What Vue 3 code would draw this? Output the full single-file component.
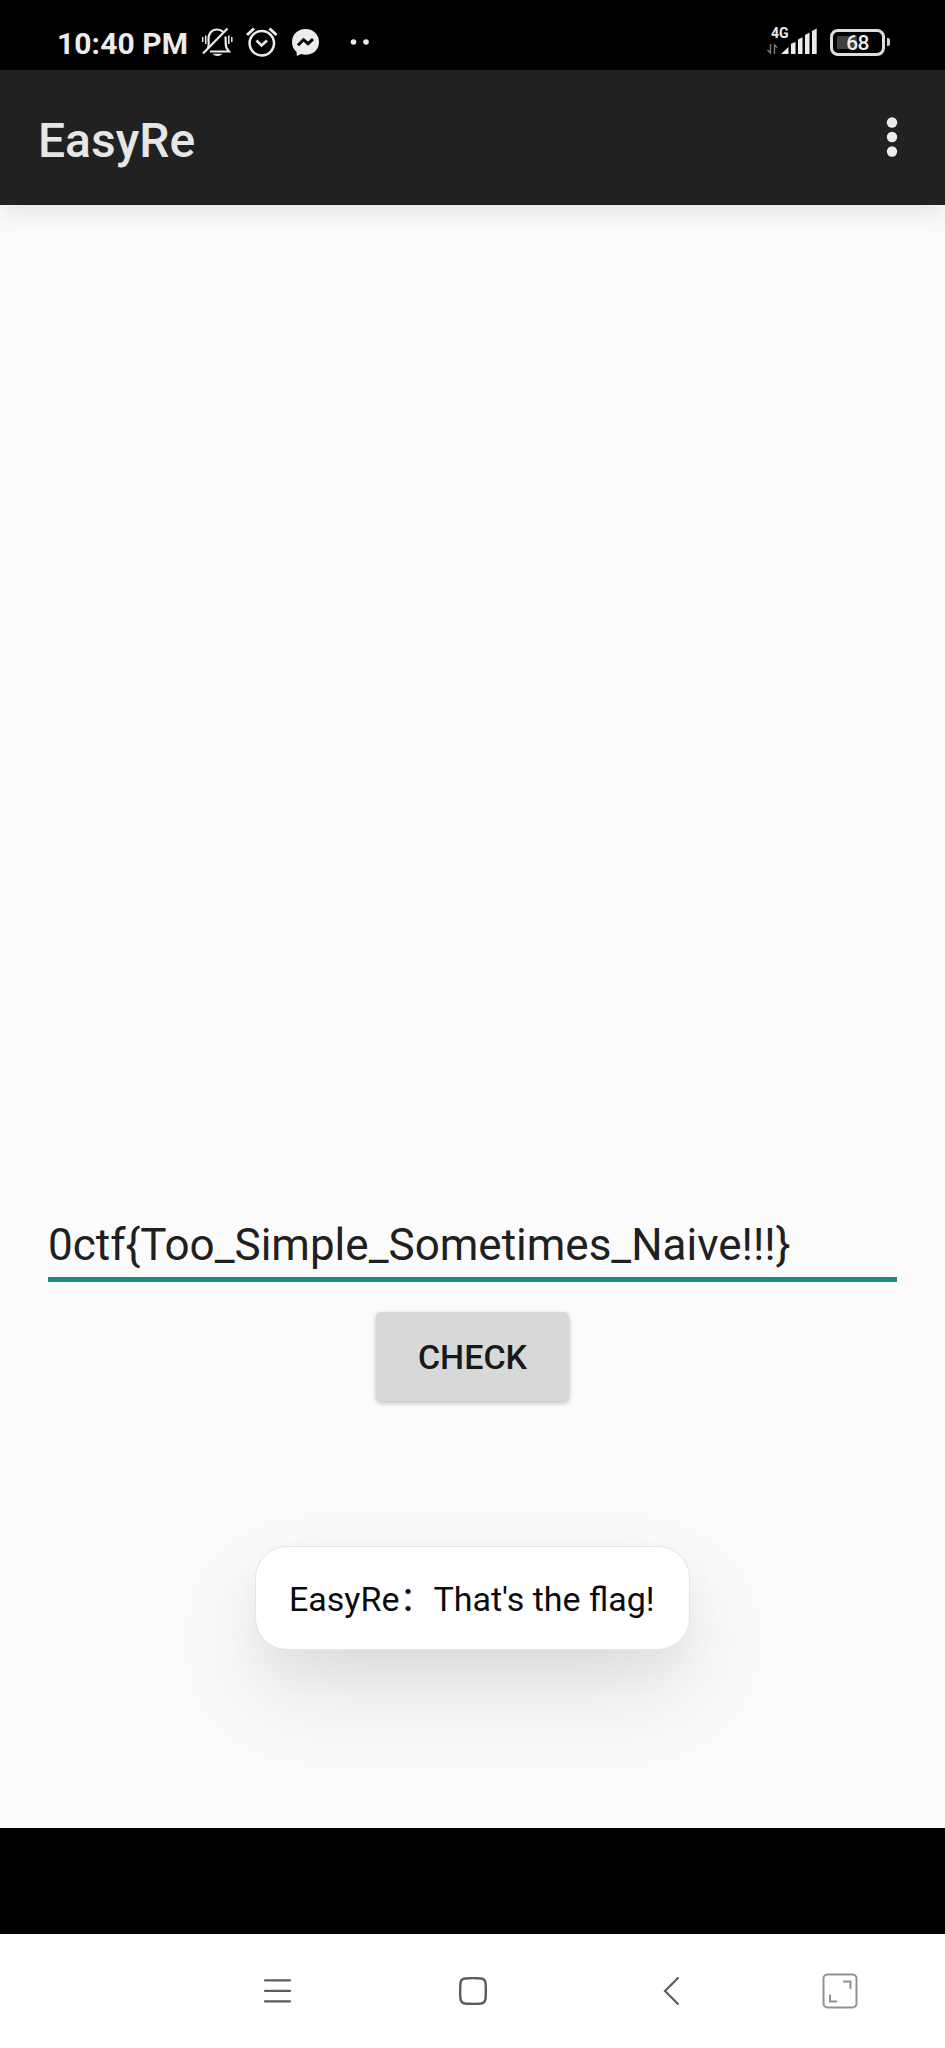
<script setup>
import { ref } from 'vue'

const flag = ref('0ctf{Too_Simple_Sometimes_Naive!!!}')
</script>

<template>
  <div class="phone">
    <header class="status">
      <span class="time">10:40 PM</span>
      <svg class="bell" width="32" height="34" viewBox="201 26 32 34" fill="none" stroke="#ececec" stroke-width="2.200">
        <path d="M207.500 48.500C209.500 46.500 208.500 43 208.500 39.500C208.500 33 212 29.500 217 29.500C219.500 29.500 221.500 30.300 223 31.800M225.500 36.500C226 41 225.200 45.500 226.500 48L229 51.500H210" />
        <path d="M203 53.500L227.500 28.500" />
        <path d="M212.500 53.800H222.500Q220.500 56 217.500 56Q214.500 56 212.500 53.800Z" fill="#ececec" stroke="none" />
        <path d="M202.700 37V42M205.700 35.500V44M228.800 35.500V44M231.800 37V42" stroke-width="1.500" />
      </svg>
      <svg class="alarm" width="32" height="34" viewBox="246 26 32 34" fill="none" stroke="#ececec" stroke-width="2.500">
        <circle cx="261.800" cy="43.300" r="12.200" />
        <path d="M256.500 40.500L261.500 45.500L267 40.500" />
        <path d="M247 35L254 28.500M269.500 28.500L276.500 35" stroke-width="3" />
      </svg>
      <svg class="messenger" width="28" height="34" viewBox="292 26 28 34">
        <path d="M305.500 29C313.500 29 319 34.600 319 42C319 49.500 313.500 54.700 305.500 54.700C303.800 54.700 302.300 54.500 301 54.100L297.500 55.800Q296.700 56 296.700 55L296.600 52C293.700 49.600 292 46.100 292 42C292 34.600 297.500 29 305.500 29Z" fill="#ececec" />
        <path d="M298 45.200L303.500 39.700L308 43.700L313 39.200" fill="none" stroke="#080808" stroke-width="3" />
      </svg>
      <svg class="more-notes" width="20" height="10" viewBox="350 37 20 10" fill="#ececec">
        <circle cx="353.500" cy="42" r="2.800" />
        <circle cx="366" cy="42" r="2.800" />
      </svg>
      <div class="network">
        <span class="net-type">4G</span>
        <svg width="52" height="30" viewBox="765 26 52 30">
          <path d="M769.500 44V53L766.500 50M773.500 54V45L776 47.500" fill="none" stroke="#858585" stroke-width="1.300" />
          <path d="M780 54L787.500 47V54ZM790 54V43.800L794.500 42V54ZM797 54V39.500L801.500 37.200V54ZM804 54V35L808.500 32.500V54ZM811 54V31L815.700 28.500V54Z" fill="#ececec" />
        </svg>
      </div>
      <div class="battery"><span class="level"></span><span class="percent">68</span></div>
      <span class="cap"></span>
    </header>

    <div class="appbar">
      <h1>EasyRe</h1>
      <svg width="12" height="42" viewBox="0 0 12 42" fill="#ebebeb">
        <circle cx="6" cy="6.500" r="5.200" />
        <circle cx="6" cy="21" r="5.200" />
        <circle cx="6" cy="35.500" r="5.200" />
      </svg>
    </div>

    <main>
      <div class="field">{{ flag }}</div>
      <button class="check">CHECK</button>
      <div class="toast"><span>EasyRe：That's the flag!</span></div>
    </main>

    <div class="gap"></div>

    <nav>
      <svg class="recent" width="28" height="28" viewBox="0 0 28 28" fill="none" stroke="#5c5c5c" stroke-width="2.200">
        <path d="M2 3.300H27M2 13.800H27M2 24.300H27" stroke-linecap="round" />
      </svg>
      <svg class="home" width="28" height="28" viewBox="0 0 28 28" fill="none" stroke="#5c5c5c" stroke-width="2.400">
        <path d="M6 1.500Q14 .7 22 1.500Q26 2 26.500 6Q27.200 14 26.500 22Q26 26 22 26.500Q14 27.300 6 26.500Q2 26 1.500 22Q.8 14 1.500 6Q2 2 6 1.500Z" />
      </svg>
      <svg class="back" width="18" height="30" viewBox="0 0 18 30" fill="none" stroke="#5c5c5c" stroke-width="2.200">
        <path d="M15.500 1.500L2 15L15.500 28.500" />
      </svg>
      <svg class="expand" width="36" height="36" viewBox="0 0 36 36" fill="none" stroke="#929292" stroke-width="2">
        <rect x="1.500" y="1.500" width="33" height="33" rx="4" />
        <path d="M21 8.500H28.500V16M8 21.500V28.500H15" />
      </svg>
    </nav>
  </div>
</template>

<style>
body {
  margin: 0;
}
</style>

<style scoped>
.phone {
  width: 945px;
  height: 2048px;
  display: flex;
  flex-direction: column;
  overflow: hidden;
  background: #fbfbfb;
  font-family: Roboto, "Noto Sans CJK SC", sans-serif;
}
.status {
  height: 70px;
  flex: none;
  box-sizing: border-box;
  display: flex;
  align-items: center;
  padding: 0 55px 0 57px;
  background: #000;
  color: #ececec;
}
.status svg {
  flex: none;
  display: block;
}
.time {
  width: 144px;
  font-size: 30px;
  font-weight: 700;
  letter-spacing: 0.1px;
  line-height: 40px;
  padding-top: 15.500px;
  height: 54px;
  box-sizing: border-box;
  white-space: nowrap;
}
.bell {
  margin-top: 16px;
}
.alarm {
  margin: 16px 0 0 13px;
}
.messenger {
  margin: 16px 0 0 14px;
}
.more-notes {
  margin: 14px 0 0 30px;
}
.network {
  position: relative;
  margin: 12px 0 0 auto;
}
.net-type {
  position: absolute;
  left: 5px;
  top: 0;
  font-size: 14px;
  font-weight: 700;
  line-height: 14px;
}
.battery {
  position: relative;
  width: 55px;
  height: 27px;
  box-sizing: border-box;
  margin: 14px 0 0 12px;
  border: 3px solid #dedede;
  border-radius: 8px;
}
.level {
  position: absolute;
  left: 4px;
  top: 4px;
  width: 20px;
  height: 13px;
  background: #3f3f3f;
}
.percent {
  position: absolute;
  inset: 0;
  text-align: center;
  font-size: 21px;
  font-weight: 500;
  letter-spacing: -0.8px;
  line-height: 23px;
}
.cap {
  width: 3px;
  height: 8px;
  margin: 14px 0 0 2px;
  border-radius: 0 2px 2px 0;
  background: #d0d0d0;
}
.appbar {
  position: relative;
  height: 134.500px;
  flex: none;
  box-sizing: border-box;
  display: flex;
  align-items: center;
  justify-content: space-between;
  padding: 0 47px 0 38px;
  background: #212121;
  box-shadow: 0 8px 26px rgba(0, 0, 0, 0.09);
}
h1 {
  margin: 7px 0 0;
  font-size: 48px;
  font-weight: 500;
  line-height: 56px;
  color: #e6e6e6;
}
main {
  height: 1623.500px;
  flex: none;
  display: flex;
  flex-direction: column;
  align-items: center;
  background: #fbfbfb;
}
.field {
  width: 849px;
  height: 78px;
  box-sizing: border-box;
  margin-top: 999.500px;
  padding-top: 13px;
  border-bottom: 5px solid #1f8e82;
  color: #202020;
  font-size: 44px;
  line-height: 56px;
  white-space: nowrap;
}
.appbar,
.gap {
  z-index: 1;
}
.check {
  width: 193px;
  height: 89px;
  margin-top: 30px;
  padding: 0;
  border: 0;
  border-radius: 5px;
  background: #d7d9d8;
  box-shadow: 0 2px 5px rgba(0, 0, 0, 0.25);
  color: #181818;
  font: 500 34px/40px Roboto, sans-serif;
}
.toast {
  width: 435px;
  height: 104px;
  box-sizing: border-box;
  margin-top: 144.500px;
  border: 1px solid #e4e4e4;
  border-radius: 32px;
  background: #fff;
  box-shadow: 0 42px 92px rgba(0, 0, 0, 0.11), 0 18px 40px rgba(0, 0, 0, 0.035);
  color: #0b0b0b;
  font-size: 34px;
  line-height: 104px;
  padding-left: 33px;
  white-space: nowrap;
}
.gap {
  height: 106px;
  flex: none;
  background: #000;
}
nav {
  height: 114px;
  flex: none;
  display: flex;
  align-items: center;
  background: #fff;
}
.recent {
  margin-left: 263px;
}
.home {
  margin-left: 167.500px;
}
.back {
  margin-left: 176px;
}
.expand {
  margin-left: 141px;
}
</style>
